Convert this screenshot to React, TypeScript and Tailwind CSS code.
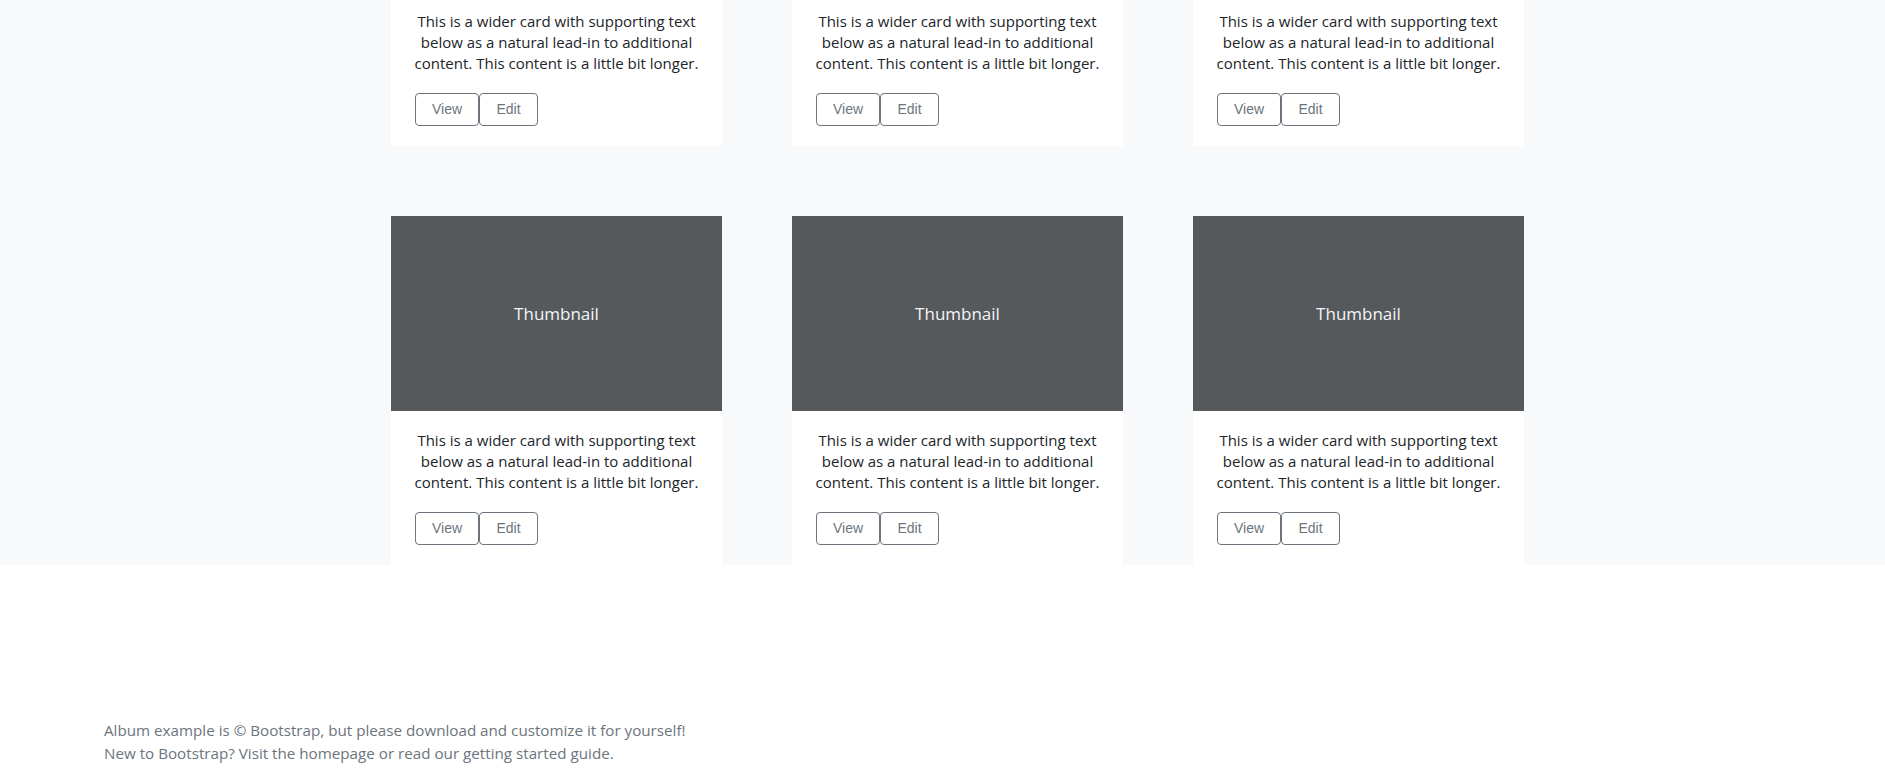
import React from "react";

const TEXT =
  "This is a wider card with supporting text below as a natural lead-in to additional content. This content is a little bit longer.";

const btnFont = { fontFamily: '"Liberation Sans", Arial, sans-serif' };

function Body() {
  return (
    <div className="pt-[19px] pb-[20px] px-[20px] flex flex-col">
      <p className="text-[#212529] text-[15px] leading-[21px] text-center mb-[19px]">{TEXT}</p>
      <div className="flex pl-[4px]">
        <button
          className="w-[64px] h-[33px] border border-[#6c757d] rounded-[4px] text-[#6c757d] text-[14px] flex items-center justify-center"
          style={btnFont}
        >
          View
        </button>
        <button
          className="w-[59px] h-[33px] border border-[#6c757d] rounded-[4px] text-[#6c757d] text-[14px] flex items-center justify-center"
          style={btnFont}
        >
          Edit
        </button>
      </div>
    </div>
  );
}

function Card({ thumb }: { thumb: boolean }) {
  return (
    <div className="bg-white flex flex-col">
      {thumb && (
        <div className="h-[195px] bg-[#55595c] flex items-center justify-center">
          <span className="text-[#f4f5f6] text-[17px] leading-none">Thumbnail</span>
        </div>
      )}
      <Body />
    </div>
  );
}

export default function App() {
  return (
    <div className="min-h-screen bg-white overflow-hidden font-['Open_Sans',sans-serif]">
      <main className="bg-[#f8f9fa] -mt-[8px]">
        <div className="ml-[391px] w-[1133px] grid grid-cols-3 gap-x-[70px] gap-y-[70px]">
          {Array.from({ length: 6 }).map((_, i) => (
            <Card key={i} thumb={i >= 3} />
          ))}
        </div>
      </main>
      <footer className="pt-[154px] pl-[104px] text-[#6c757d] text-[15.2px] leading-[23px]">
        <p>Album example is © Bootstrap, but please download and customize it for yourself!</p>
        <p>New to Bootstrap? Visit the homepage or read our getting started guide.</p>
      </footer>
    </div>
  );
}
